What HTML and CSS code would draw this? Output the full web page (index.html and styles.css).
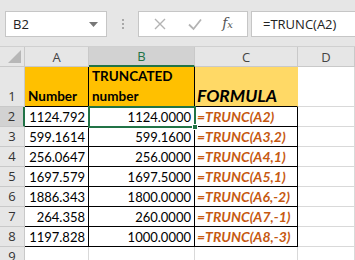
FILE: index.html
```html
<!DOCTYPE html>
<html>
<head>
<meta charset="utf-8">
<title>TRUNC</title>
<link rel="stylesheet" href="styles.css">
</head>
<body>
<div class="toolbar">
  <div class="namebox">
    <span>B2</span>
    <svg class="caret" width="9" height="5" viewBox="0 0 9 5"><path d="M0 0h9L4.5 5z" fill="#777"/></svg>
  </div>
  <div class="grip"><i></i><i></i><i></i></div>
  <div class="buttons">
    <svg width="14" height="14" viewBox="0 0 14 14"><path d="M2 2l10 10M12 2L2 12" stroke="#b3b3b3" stroke-width="1.4" fill="none"/></svg>
    <svg width="16" height="14" viewBox="0 0 16 14"><path d="M2 7.5l4.5 4.5L14 2.5" stroke="#b3b3b3" stroke-width="1.8" fill="none"/></svg>
    <span class="fx">f<sub>x</sub></span>
  </div>
  <div class="formula">=TRUNC(A2)</div>
</div>

<div class="sheet">
  <div class="hd corner"><svg width="13" height="13" viewBox="0 0 13 13"><path d="M13 0v13H0z" fill="#b7b7b7"/></svg></div>
  <div class="hd col">A</div>
  <div class="hd col sel-col">B</div>
  <div class="hd col">C</div>
  <div class="hd col">D</div>

  <div class="hd row">1</div>
  <div class="cell b fill1 title">Number</div>
  <div class="cell b fill1 title">TRUNCATED<br>number</div>
  <div class="cell b fill2 title big">FORMULA</div>
  <div class="cell"></div>

  <div class="hd row sel-row">2</div>
  <div class="cell b num">1124.792</div>
  <div class="cell b num active">1124.0000<span class="handle"></span></div>
  <div class="cell b fx-cell">=TRUNC(A2)</div>
  <div class="cell"></div>

  <div class="hd row">3</div>
  <div class="cell b num">599.1614</div>
  <div class="cell b num">599.1600</div>
  <div class="cell b fx-cell">=TRUNC(A3,2)</div>
  <div class="cell"></div>

  <div class="hd row">4</div>
  <div class="cell b num">256.0647</div>
  <div class="cell b num">256.0000</div>
  <div class="cell b fx-cell">=TRUNC(A4,1)</div>
  <div class="cell"></div>

  <div class="hd row">5</div>
  <div class="cell b num">1697.579</div>
  <div class="cell b num">1697.5000</div>
  <div class="cell b fx-cell">=TRUNC(A5,1)</div>
  <div class="cell"></div>

  <div class="hd row">6</div>
  <div class="cell b num">1886.343</div>
  <div class="cell b num">1800.0000</div>
  <div class="cell b fx-cell">=TRUNC(A6,-2)</div>
  <div class="cell"></div>

  <div class="hd row">7</div>
  <div class="cell b num">264.358</div>
  <div class="cell b num">260.0000</div>
  <div class="cell b fx-cell">=TRUNC(A7,-1)</div>
  <div class="cell"></div>

  <div class="hd row">8</div>
  <div class="cell b num">1197.828</div>
  <div class="cell b num">1000.0000</div>
  <div class="cell b fx-cell">=TRUNC(A8,-3)</div>
  <div class="cell"></div>

  <div class="hd row">9</div>
  <div class="cell"></div>
  <div class="cell"></div>
  <div class="cell"></div>
  <div class="cell"></div>
</div>
</body>
</html>
```

FILE: styles.css
```css
* {
  box-sizing: border-box;
  margin: 0;
  padding: 0;
}

body {
  width: 355px;
  height: 260px;
  overflow: hidden;
  background: #fff;
  font-family: Lato, "Open Sans", sans-serif;
}

.toolbar {
  height: 47px;
  background: #e6e6e6;
  display: flex;
  align-items: flex-start;
  padding: 11px 0 0 5px;
  border-bottom: 1px solid #d0d0d0;
}

.namebox {
  width: 102px;
  height: 26px;
  background: #fff;
  border: 1px solid #c6c6c6;
  display: flex;
  align-items: center;
  justify-content: space-between;
  padding: 0 8px 0 7px;
  font-family: "Open Sans", sans-serif;
  font-size: 13px;
  color: #222;
}

.grip {
  width: 31px;
  display: flex;
  flex-direction: column;
  align-items: center;
  gap: 2px;
  padding-top: 8px;
}

.grip i {
  width: 2px;
  height: 2px;
  background: #a8a8a8;
}

.buttons {
  width: 110px;
  height: 26px;
  background: #fff;
  border: 1px solid #c6c6c6;
  display: flex;
  align-items: center;
  padding: 0 14px 0 14px;
  justify-content: space-between;
}

.fx {
  font-family: "DejaVu Serif", serif;
  font-style: italic;
  font-size: 14px;
  color: #555;
  position: relative;
  top: -1px;
}

.fx sub {
  font-size: 10px;
  vertical-align: 0;
}

.formula {
  flex: 1;
  height: 26px;
  margin-left: 3px;
  background: #fff;
  border: 1px solid #c6c6c6;
  border-right: none;
  padding: 3px 0 0 11px;
  font-family: "Open Sans", sans-serif;
  font-size: 13px;
  color: #222;
}

.sheet {
  display: grid;
  grid-template-columns: 25px 64px 106px 103px 57px;
  grid-template-rows: 20px 40px repeat(8, 20px);
}

.hd {
  background: #e6e6e6;
  color: #444;
  font-family: "Open Sans", sans-serif;
  font-size: 13px;
  display: flex;
  align-items: center;
  justify-content: center;
  border-right: 1px solid #c9c9c9;
  border-bottom: 1px solid #c9c9c9;
}

.corner {
  align-items: flex-end;
  justify-content: flex-end;
  padding: 0 3px 3px 0;
}

.hd.row {
  align-items: flex-end;
  padding-bottom: 1px;
  color: #333;
}

.sel-col {
  background: #d2d2d2;
  color: #217346;
  border-bottom: 2px solid #217346;
}

.sel-row {
  background: #d2d2d2;
  color: #217346;
  border-right: 2px solid #217346;
}

.cell {
  position: relative;
  border-right: 1px solid #d9d9d9;
  border-bottom: 1px solid #d9d9d9;
  display: flex;
  align-items: flex-end;
  padding: 0 3px 1px 3px;
  font-size: 13px;
  color: #000;
  white-space: nowrap;
}

.cell.b {
  border-right-color: #000;
  border-bottom-color: #000;
}

.fill1 {
  background: #ffc000;
}

.fill2 {
  background: #ffd966;
  border-right-color: #ffd966 !important;
}

.title {
  font-weight: bold;
  font-size: 13.5px;
  line-height: 20px;
  padding-bottom: 0;
}

.big {
  font-style: italic;
  font-size: 17.5px;
  padding-left: 2px;
}

.num {
  justify-content: flex-end;
}

.fx-cell {
  font-weight: bold;
  font-style: italic;
  font-size: 14px;
  color: #c65911;
  padding-left: 2px;
}

.active {
  outline: 2px solid #217346;
  outline-offset: -1px;
  z-index: 1;
}

.handle {
  position: absolute;
  right: -4px;
  bottom: -4px;
  width: 6px;
  height: 6px;
  background: #217346;
  border: 1px solid #fff;
}
```
